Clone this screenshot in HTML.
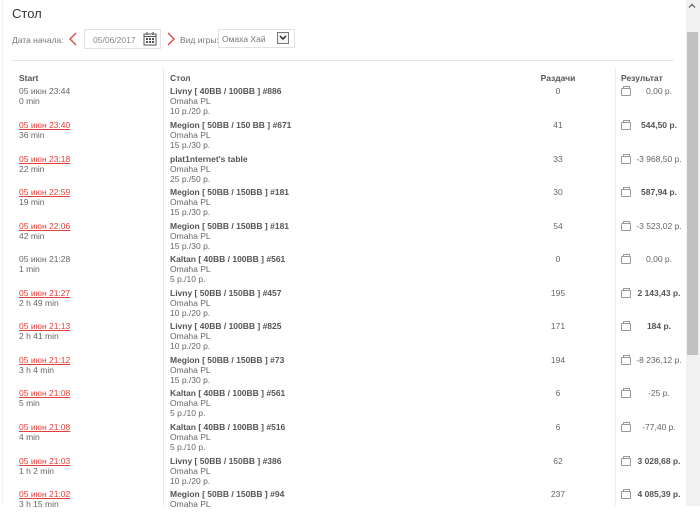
<!DOCTYPE html>
<html><head><meta charset="utf-8"><style>
*{margin:0;padding:0;box-sizing:border-box}
body{width:700px;height:506px;overflow:hidden;background:#fff;font-family:"Liberation Sans",Arial,sans-serif;color:#666;font-size:8.5px;position:relative}
.a{position:absolute;white-space:nowrap}
h1{position:absolute;left:12px;top:6px;font-size:13px;font-weight:normal;color:#333}
.lbl{font-size:8.5px;color:#777}
.box{position:absolute;border:1px solid #e2e2e2;background:#fff}
.hdr{font-weight:bold;color:#555;font-size:8.5px}
.row{position:absolute;left:0;width:686px;height:34px;line-height:10px}
.s{position:absolute;left:19px;top:0}
.s a{color:#e0413a;text-decoration:underline}
.t{position:absolute;left:170px;top:0}
.t b{color:#555}
.n{position:absolute;left:520px;width:76px;text-align:center;top:0}
.r{position:absolute;left:633px;width:52px;text-align:center;top:0}
.r.b{font-weight:bold;color:#555}
.ic{position:absolute;left:621px;top:2px;width:10px;height:8px;border:1px solid #999;border-radius:1px}
.ic:before{content:"";position:absolute;left:1px;top:-3px;width:5px;height:2px;border:1px solid #999;border-bottom:none}
</style></head><body>
<h1>Стол</h1>
<div class="a lbl" style="left:12px;top:35px">Дата начала:</div>
<svg class="a" style="left:68px;top:32px" width="10" height="14"><path d="M8 1 L2 7 L8 13" fill="none" stroke="#e0413a" stroke-width="1.3"/></svg>
<div class="box" style="left:84px;top:29px;width:77px;height:20px"></div>
<div class="a" style="left:93px;top:35px;color:#888;font-size:8.5px">05/06/2017</div>
<svg class="a" style="left:143px;top:32px" width="14" height="14"><rect x="1" y="2" width="12" height="11" fill="none" stroke="#555" stroke-width="1"/><line x1="1" y1="4.5" x2="13" y2="4.5" stroke="#555"/><line x1="4" y1="0" x2="4" y2="3" stroke="#555"/><line x1="10" y1="0" x2="10" y2="3" stroke="#555"/><g fill="#555"><rect x="3" y="6" width="2" height="2"/><rect x="6" y="6" width="2" height="2"/><rect x="9" y="6" width="2" height="2"/><rect x="3" y="9" width="2" height="2"/><rect x="6" y="9" width="2" height="2"/><rect x="9" y="9" width="2" height="2"/></g></svg>
<svg class="a" style="left:166px;top:32px" width="10" height="14"><path d="M2 1 L8 7 L2 13" fill="none" stroke="#e0413a" stroke-width="1.3"/></svg>
<div class="a lbl" style="left:180px;top:35px">Вид игры:</div>
<div class="box" style="left:218px;top:29px;width:77px;height:19px"></div>
<div class="a" style="left:222px;top:34px;color:#777">Омаха Хай</div>
<div class="box" style="left:277px;top:32px;width:12px;height:12px;border-color:#777;background:#f4f4f4"></div>
<svg class="a" style="left:279px;top:35px" width="8" height="6"><path d="M1 1 L4 4 L7 1" fill="none" stroke="#222" stroke-width="1.4"/></svg>
<div class="a" style="left:12px;top:60px;width:662px;height:1px;background:#e6e6e6"></div>
<div class="a" style="left:163px;top:68px;width:1px;height:438px;background:#ececec"></div>
<div class="a" style="left:615px;top:68px;width:1px;height:438px;background:#ececec"></div>
<div class="a" style="left:2px;top:0;width:1px;height:506px;background:#f0f0f0"></div>
<div class="a hdr" style="left:19px;top:73px">Start</div>
<div class="a hdr" style="left:170px;top:73px">Стол</div>
<div class="a hdr" style="left:520px;width:76px;text-align:center;top:73px">Раздачи</div>
<div class="a hdr" style="left:621px;top:73px">Результат</div>

<div class="row" style="top:86px"><div class="s">05 июн 23:44<br>0 min</div><div class="t"><b>Livny [ 40BB / 100BB ] #886</b><br>Omaha PL<br>10 р./20 р.</div><div class="n">0</div><i class="ic"></i><div class="r">0,00 р.</div></div>
<div class="row" style="top:120px"><div class="s"><a>05 июн 23:40</a><br>36 min</div><div class="t"><b>Megion [ 50BB / 150 BB ] #671</b><br>Omaha PL<br>15 р./30 р.</div><div class="n">41</div><i class="ic"></i><div class="r b">544,50 р.</div></div>
<div class="row" style="top:154px"><div class="s"><a>05 июн 23:18</a><br>22 min</div><div class="t"><b>plat1nternet's table</b><br>Omaha PL<br>25 р./50 р.</div><div class="n">33</div><i class="ic"></i><div class="r">-3 968,50 р.</div></div>
<div class="row" style="top:187px"><div class="s"><a>05 июн 22:59</a><br>19 min</div><div class="t"><b>Megion [ 50BB / 150BB ] #181</b><br>Omaha PL<br>15 р./30 р.</div><div class="n">30</div><i class="ic"></i><div class="r b">587,94 р.</div></div>
<div class="row" style="top:221px"><div class="s"><a>05 июн 22:06</a><br>42 min</div><div class="t"><b>Megion [ 50BB / 150BB ] #181</b><br>Omaha PL<br>15 р./30 р.</div><div class="n">54</div><i class="ic"></i><div class="r">-3 523,02 р.</div></div>
<div class="row" style="top:254px"><div class="s">05 июн 21:28<br>1 min</div><div class="t"><b>Kaltan [ 40BB / 100BB ] #561</b><br>Omaha PL<br>5 р./10 р.</div><div class="n">0</div><i class="ic"></i><div class="r">0,00 р.</div></div>
<div class="row" style="top:288px"><div class="s"><a>05 июн 21:27</a><br>2 h 49 min</div><div class="t"><b>Livny [ 50BB / 150BB ] #457</b><br>Omaha PL<br>10 р./20 р.</div><div class="n">195</div><i class="ic"></i><div class="r b">2 143,43 р.</div></div>
<div class="row" style="top:321px"><div class="s"><a>05 июн 21:13</a><br>2 h 41 min</div><div class="t"><b>Livny [ 40BB / 100BB ] #825</b><br>Omaha PL<br>10 р./20 р.</div><div class="n">171</div><i class="ic"></i><div class="r b">184 р.</div></div>
<div class="row" style="top:355px"><div class="s"><a>05 июн 21:12</a><br>3 h 4 min</div><div class="t"><b>Megion [ 50BB / 150BB ] #73</b><br>Omaha PL<br>15 р./30 р.</div><div class="n">194</div><i class="ic"></i><div class="r">-8 236,12 р.</div></div>
<div class="row" style="top:388px"><div class="s"><a>05 июн 21:08</a><br>5 min</div><div class="t"><b>Kaltan [ 40BB / 100BB ] #561</b><br>Omaha PL<br>5 р./10 р.</div><div class="n">6</div><i class="ic"></i><div class="r">-25 р.</div></div>
<div class="row" style="top:422px"><div class="s"><a>05 июн 21:08</a><br>4 min</div><div class="t"><b>Kaltan [ 40BB / 100BB ] #516</b><br>Omaha PL<br>5 р./10 р.</div><div class="n">6</div><i class="ic"></i><div class="r">-77,40 р.</div></div>
<div class="row" style="top:456px"><div class="s"><a>05 июн 21:03</a><br>1 h 2 min</div><div class="t"><b>Livny [ 50BB / 150BB ] #386</b><br>Omaha PL<br>10 р./20 р.</div><div class="n">62</div><i class="ic"></i><div class="r b">3 028,68 р.</div></div>
<div class="row" style="top:489px"><div class="s"><a>05 июн 21:02</a><br>3 h 15 min</div><div class="t"><b>Megion [ 50BB / 150BB ] #94</b><br>Omaha PL</div><div class="n">237</div><i class="ic"></i><div class="r b">4 085,39 р.</div></div>

<div class="a" style="left:686px;top:0;width:14px;height:506px;background:#f1f1f1"></div>
<div class="a" style="left:687px;top:32px;width:11px;height:323px;background:#c1c1c1"></div>
<svg class="a" style="left:688px;top:3px" width="8" height="6"><path d="M1 4.5 L4 1.5 L7 4.5" fill="none" stroke="#555" stroke-width="1.2"/></svg>
</body></html>
